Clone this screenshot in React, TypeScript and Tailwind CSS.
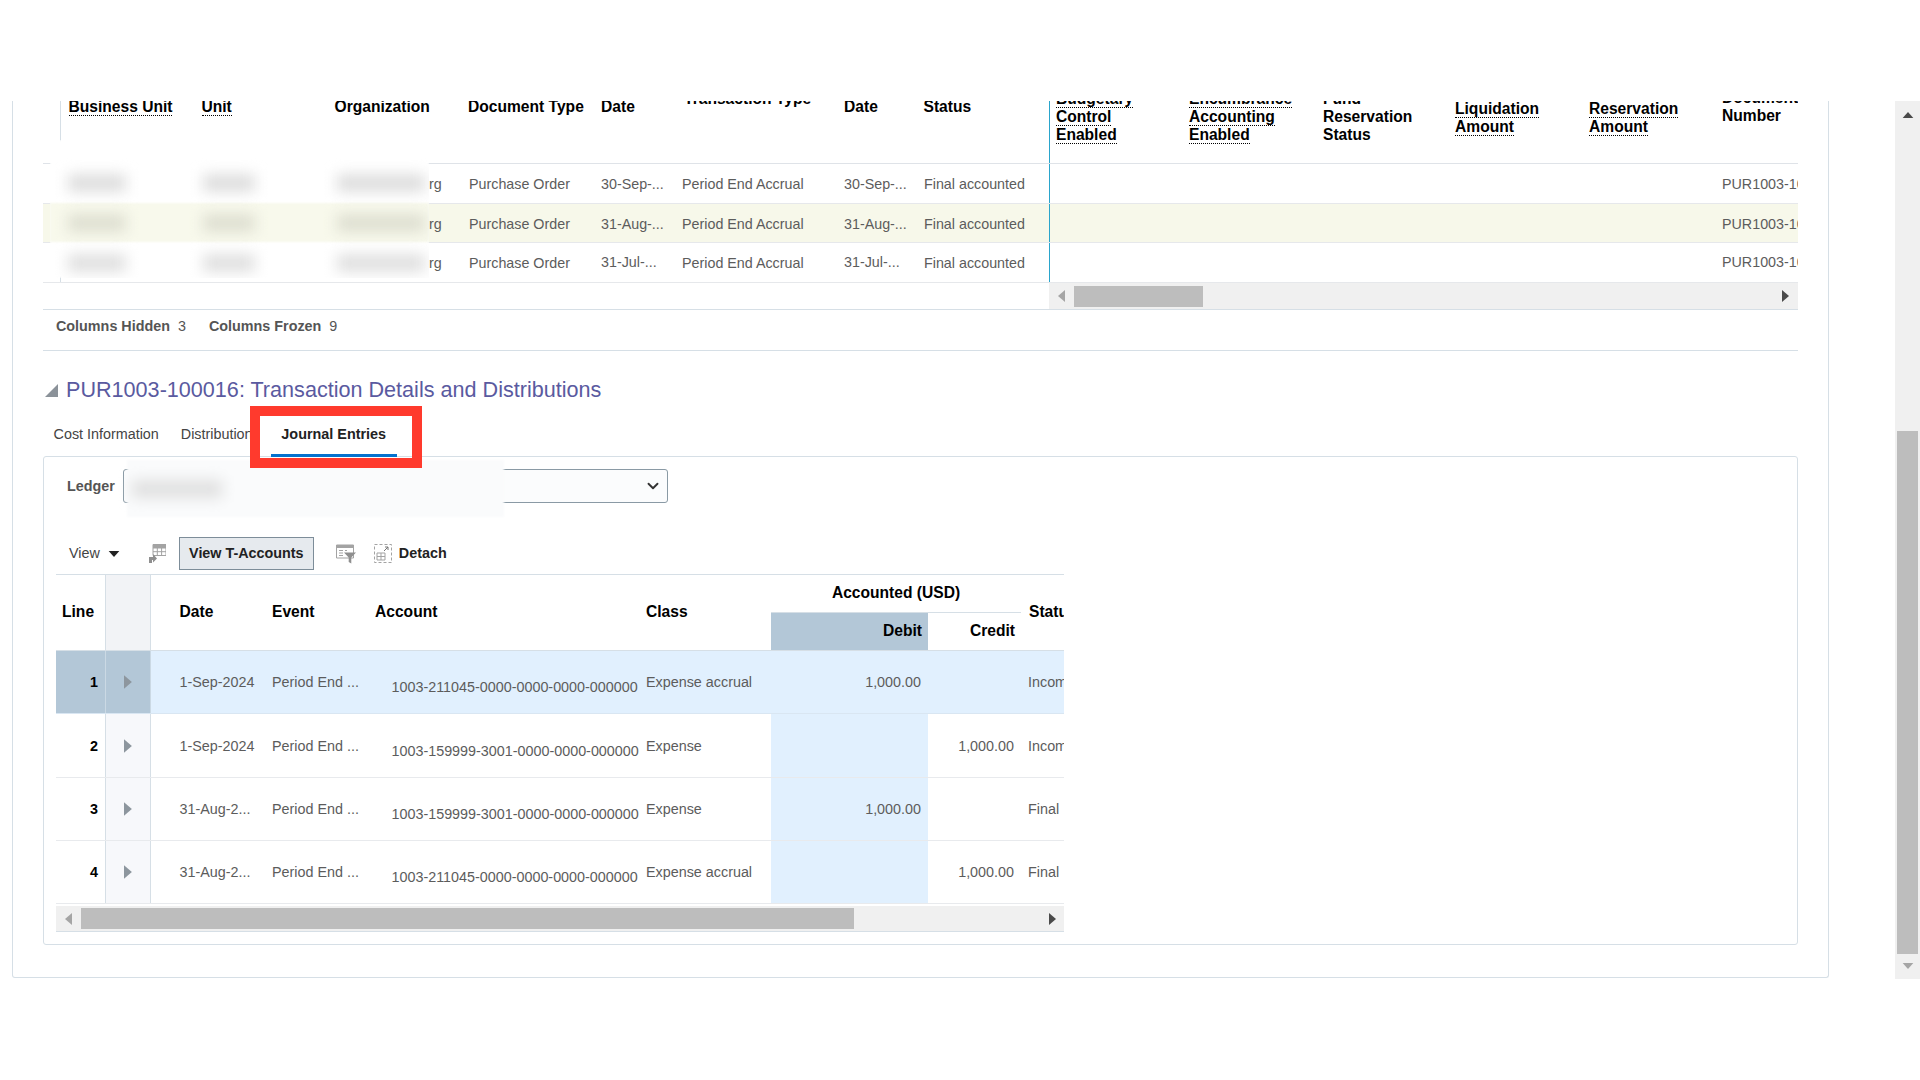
import { ChevronDown } from 'lucide-react'

const headerCols = [
  { w: 'w-[133px]', pl: 'pl-[7.5px]', pb: 'pb-[47px]', lines: ['Business Unit'], dotted: true },
  { w: 'w-[133px]', pl: 'pl-[7.5px]', pb: 'pb-[47px]', lines: ['Unit'], dotted: true },
  { w: 'w-[134px]', pl: 'pl-[7.5px]', pb: 'pb-[47px]', lines: ['Organization'], dotted: false },
  { w: 'w-[133px]', pl: 'pl-[7px]', pb: 'pb-[47px]', lines: ['Document Type'], dotted: false },
  { w: 'w-[80px]', pl: 'pl-[7px]', pb: 'pb-[47px]', lines: ['Date'], dotted: false },
  { w: 'w-[162px]', pl: 'pl-[10px]', pb: 'pb-[55px]', lines: ['Transaction Type'], dotted: false },
  { w: 'w-[81px]', pl: 'pl-[8px]', pb: 'pb-[47px]', lines: ['Date'], dotted: false },
  { w: 'w-[132px]', pl: 'pl-[6.5px]', pb: 'pb-[47px]', lines: ['Status'], dotted: false },
  { w: 'w-[133px] border-l border-[#2aa5cc]', pl: 'pl-[6px]', pb: 'pb-[19px]', lines: ['Budgetary', 'Control', 'Enabled'], dotted: true },
  { w: 'w-[133px]', pl: 'pl-[7px]', pb: 'pb-[19px]', lines: ['Encumbrance', 'Accounting', 'Enabled'], dotted: true },
  { w: 'w-[133px]', pl: 'pl-[8px]', pb: 'pb-[19px]', lines: ['Fund', 'Reservation', 'Status'], dotted: false },
  { w: 'w-[134px]', pl: 'pl-[7px]', pb: 'pb-[27px]', lines: ['Liquidation', 'Amount'], dotted: true },
  { w: 'w-[133px]', pl: 'pl-[7px]', pb: 'pb-[27px]', lines: ['Reservation', 'Amount'], dotted: true },
  { w: 'w-[83px]', pl: 'pl-[7px]', pb: 'pb-[38px]', lines: ['Document', 'Number'], dotted: false },
]

const topRows = [
  { h: 'h-[40px]', bg: 'bg-white', date: '30-Sep-...', pt: 'pt-[2px]', datePt: 'pt-[2px]' },
  { h: 'h-[39px]', bg: 'bg-[#f7f8ea]', date: '31-Aug-...', pt: 'pt-[4px]', datePt: 'pt-[3px]' },
  { h: 'h-[40px]', bg: 'bg-white', date: '31-Jul-...', pt: 'pt-[2px]', datePt: 'pt-0' },
]

const journalRows = [
  { line: 1, h: 'h-[63px]', date: '1-Sep-2024', account: '1003-211045-0000-0000-0000-000000', cls: 'Expense accrual', debit: '1,000.00', credit: '', status: 'Incomplete', selected: true },
  { line: 2, h: 'h-[64px]', date: '1-Sep-2024', account: '1003-159999-3001-0000-0000-000000', cls: 'Expense', debit: '', credit: '1,000.00', status: 'Incomplete', selected: false },
  { line: 3, h: 'h-[63px]', date: '31-Aug-2...', account: '1003-159999-3001-0000-0000-000000', cls: 'Expense', debit: '1,000.00', credit: '', status: 'Final', selected: false },
  { line: 4, h: 'h-[63px]', date: '31-Aug-2...', account: '1003-211045-0000-0000-0000-000000', cls: 'Expense accrual', debit: '', credit: '1,000.00', status: 'Final', selected: false },
]

function Triangle({ dir, className, box }: { dir: 'left' | 'right' | 'up' | 'down'; className: string; box?: string }) {
  const points = {
    left: '8,0 8,12 1,6',
    right: '0,0 0,12 7,6',
    up: '6,1 12,8 0,8',
    down: '0,1 12,1 6,8',
  }[dir]
  const size = box ?? (dir === 'left' || dir === 'right' ? 'w-[8px] h-[12px]' : 'w-[12px] h-[8px]')
  const viewBox = dir === 'left' || dir === 'right' ? '0 0 8 12' : '0 0 12 9'
  return (
    <svg viewBox={viewBox} className={`${size} ${className}`}>
      <polygon points={points} fill="currentColor" />
    </svg>
  )
}

function FreezeIcon() {
  return (
    <svg viewBox="0 0 18 20" className="w-[18px] h-[20px] text-[#a3a3a3] ml-[1px]">
      <path d="M5 0.5h13v11h-13z M5 4h13 M5 7.7h13 M9.3 0.5v11 M13.6 0.5v11" fill="none" stroke="currentColor" strokeWidth="1" />
      <rect x="5" y="0.5" width="13" height="3.5" fill="currentColor" />
      <path d="M1 19v-6h4v-3l4 4.5-4 4v-2.5h-1v3z" fill="#8f8f8f" />
    </svg>
  )
}

function FilterIcon() {
  return (
    <svg viewBox="0 0 20 20" className="w-[20px] h-[20px] text-[#a3a3a3]">
      <path d="M0.5 1h17v13h-17z" fill="none" stroke="currentColor" />
      <rect x="0.5" y="1" width="17" height="3" fill="currentColor" />
      <path d="M3 6.5h4M3 9h4M3 11.5h4M9 6.5h2" stroke="currentColor" />
      <path d="M8 8.5h12l-4.7 5v6l-2.6-1.5v-4.5z" fill="#8f8f8f" />
    </svg>
  )
}

function DetachIcon() {
  return (
    <svg viewBox="0 0 18 19" className="w-[18px] h-[19px] text-[#a3a3a3]">
      <rect x="0.5" y="0.5" width="17" height="18" fill="none" stroke="currentColor" strokeDasharray="3 2" />
      <path d="M3 9h8v7h-8z M3 12.5h8 M7 9v7" fill="none" stroke="currentColor" />
      <path d="M10 7l4-4M11 3h3v3" fill="none" stroke="#777" />
    </svg>
  )
}

function Blob({ className }: { className: string }) {
  return <div className={`h-[18px] blur-[7px] ${className}`} />
}

function TopTable() {
  return (
    <div className="relative w-[1755px]">
      <div className="flex h-[63px] border-b border-[#dfe3e8] overflow-hidden">
        <div className="w-[18px] border-r border-[#d6dfe6]" />
        {headerCols.map((col, i) => (
          <div key={i} className={`${col.w} ${col.pl} ${col.pb} shrink-0 flex flex-col justify-end overflow-hidden text-[15.6px] font-bold text-black whitespace-nowrap`}>
            {col.lines.map((text) =>
              col.dotted ? (
                <span key={text} className="block w-fit leading-[17px] border-b border-dotted border-black">{text}</span>
              ) : (
                <span key={text} className="block leading-[18px]">{text}</span>
              )
            )}
          </div>
        ))}
      </div>

      {topRows.map((row, i) => (
        <div key={i} className={`flex items-center ${row.h} ${row.bg} border-b border-[#e6e8eb] text-[14.3px] text-[#5c5c5c] whitespace-nowrap`}>
          <div className="w-[18px] h-full border-r border-[#d6dfe6]" />
          <div className={`w-[400px] pl-[368px] ${row.pt}`}>rg</div>
          <div className={`w-[133px] pl-[8px] ${row.pt}`}>Purchase Order</div>
          <div className={`w-[80px] pl-[7px] ${row.datePt}`}>{row.date}</div>
          <div className={`w-[162px] pl-[8px] ${row.pt}`}>Period End Accrual</div>
          <div className={`w-[81px] pl-[8px] ${row.datePt}`}>{row.date}</div>
          <div className={`w-[132px] pl-[7px] ${row.pt}`}>Final accounted</div>
          <div className="w-[666px] h-full border-l border-[#2aa5cc]" />
          <div className={`w-[83px] pl-[7px] overflow-hidden ${row.datePt}`}>PUR1003-100016</div>
        </div>
      ))}

      <div className="flex h-[27px] border-b border-[#d6dfe6]">
        <div className="w-[1006px]" />
        <div className="w-[749px] h-[26px] bg-[#f0f0f0] flex items-center">
          <Triangle dir="left" className="text-[#a5a5a5] ml-[8px]" />
          <div className="ml-[9px] w-[129px] h-[21px] bg-[#bdbdbd]" />
          <div className="flex-1" />
          <Triangle dir="right" className="text-[#4a4a4a] mr-[8px]" />
        </div>
      </div>

      {/* redacted columns, painted over the rows */}
      <div className="absolute left-[7px] top-[39px] w-[379px] h-[138px] overflow-hidden z-10">
        <div className="absolute inset-0 bg-white blur-[1px]" />
        <div className="absolute left-0 right-0 top-[63px] h-[39px] bg-[#f8f9ec] blur-[1px]" />
        <div className="relative flex flex-col pt-[23px]">
          {['bg-[#dedede]', 'bg-[#dedfd1]', 'bg-[#e0e0e0]'].map((tone, i) => (
            <div key={i} className="flex items-center h-[40px]">
              <Blob className={`ml-[18px] w-[58px] ${tone}`} />
              <Blob className={`ml-[77px] w-[52px] ${tone}`} />
              <Blob className={`ml-[82px] w-[88px] ${tone}`} />
            </div>
          ))}
        </div>
      </div>
    </div>
  )
}

function JournalTable() {
  return (
    <div className="w-[1008px]">
      <div className="flex h-[76px] border-b border-[#d6dfe6] text-[15.6px] font-bold text-black whitespace-nowrap">
        <div className="w-[49px] pl-[6px] pb-[2px] flex items-center">Line</div>
        <div className="w-[46px] bg-[#f2f3f6] border-x border-[#d6dfe6]" />
        <div className="w-[23px]" />
        <div className="w-[92px] pl-[5.5px] pb-[2px] flex items-center">Date</div>
        <div className="w-[102px] pl-[6px] pb-[2px] flex items-center">Event</div>
        <div className="w-[271px] pl-[7px] pb-[2px] flex items-center">Account</div>
        <div className="w-[132px] pl-[7px] pb-[2px] flex items-center">Class</div>
        <div className="w-[250px] flex flex-col">
          <div className="h-[38px] pb-[2px] flex items-center justify-center border-b border-[#d6dfe6]">Accounted (USD)</div>
          <div className="flex-1 flex">
            <div className="w-[157px] bg-[#b3c7d7] pr-[6px] pb-[2px] flex items-center justify-end">Debit</div>
            <div className="w-[93px] pr-[6px] pb-[2px] flex items-center justify-end">Credit</div>
          </div>
        </div>
        <div className="w-[43px] pl-[8px] pb-[2px] flex items-center overflow-hidden">Status</div>
      </div>

      {journalRows.map((row) => (
        <div key={row.line} className={`flex ${row.h} border-b ${row.selected ? 'border-[#d9e6f2] bg-[#e1f0fe]' : 'border-[#e8eaed] bg-white'} text-[14.35px] text-[#5c5c5c] whitespace-nowrap`}>
          <div className={`w-[49px] pr-[7px] pt-[2px] flex items-center justify-end font-bold text-black ${row.selected ? 'bg-[#b3c7d7]' : ''}`}>{row.line}</div>
          <div className={`w-[46px] border-x flex items-center pl-[18px] ${row.selected ? 'bg-[#b3c7d7] border-[#cbd9e4]' : 'bg-[#f7f8fb] border-[#d6dfe6]'}`}>
            <Triangle dir="right" box="w-[9px] h-[14px]" className="text-[#8d969e]" />
          </div>
          <div className="w-[23px]" />
          <div className="w-[92px] pl-[5.5px] pt-[2px] flex items-center">{row.date}</div>
          <div className="w-[102px] pl-[6px] pt-[2px] flex items-center">Period End ...</div>
          <div className="w-[271px] pl-[23.5px] pt-[12px] flex items-center">{row.account}</div>
          <div className="w-[132px] pl-[7px] pt-[2px] flex items-center">{row.cls}</div>
          <div className="w-[157px] pr-[7px] pt-[2px] flex items-center justify-end bg-[#e1f0fe]">{row.debit}</div>
          <div className="w-[93px] pr-[7px] pt-[2px] flex items-center justify-end">{row.credit}</div>
          <div className="w-[43px] pl-[7px] pt-[2px] flex items-center overflow-hidden">{row.status}</div>
        </div>
      ))}

      <div className="mt-[2px] h-[26px] bg-[#f0f0f0] border-b border-[#d6dfe6] flex items-center">
        <Triangle dir="left" className="text-[#a5a5a5] ml-[8px]" />
        <div className="ml-[9px] w-[773px] h-[21px] bg-[#bdbdbd]" />
        <div className="flex-1" />
        <Triangle dir="right" className="text-[#4a4a4a] mr-[7px]" />
      </div>
    </div>
  )
}

export default function App() {
  return (
    <div className="w-[1920px] h-[1080px] bg-white overflow-hidden pt-[101px] pl-[12px] flex items-start font-['Liberation_Sans',Arial,sans-serif]">
      <main className="w-[1817px] h-[877px] shrink-0 border-x border-b border-[#d6dfe6] rounded-b-[3px] pl-[30px]">
        <TopTable />

        <div className="w-[1755px] h-[41px] pb-[7px] pl-[13px] flex items-center border-b border-[#d6dfe6] text-[14.35px] text-[#555] whitespace-nowrap">
          <span className="font-bold">Columns Hidden</span>
          <span className="ml-[8px]">3</span>
          <span className="ml-[23px] font-bold">Columns Frozen</span>
          <span className="ml-[8px]">9</span>
        </div>

        <div className="h-[60px] pt-[18px] pl-[2px] flex items-center">
          <svg viewBox="0 0 13 13" className="w-[13px] h-[13px] text-[#8b9299]">
            <polygon points="13,0 13,13 0,13" fill="currentColor" />
          </svg>
          <h2 className="ml-[8px] text-[21.6px] font-normal text-[#5a5aa0] whitespace-nowrap">PUR1003-100016: Transaction Details and Distributions</h2>
        </div>

        <div className="relative h-[46px] -mb-px z-20 flex text-[14.35px] whitespace-nowrap">
          <div className="ml-[10.6px] pt-[2px] flex items-center text-[#444]">Cost Information</div>
          <div className="ml-[22px] pt-[2px] flex items-center text-[#444]">Distributions</div>
          <div className="ml-[11px] w-[126px] pt-[5px] flex items-center justify-center border-b-[3px] border-[#0572ce] font-bold text-[#222]">
            <span className="text-[14.4px]">Journal Entries</span>
          </div>
          {/* annotation box from the screenshot */}
          <div className="absolute left-[207px] top-[-5px] w-[172px] h-[62px] border-[10px] border-[#ff3a2d]" />
        </div>

        <section className="relative w-[1755px] h-[489px] border border-[#d6dfe6] rounded-[3px] pl-[12px]">
          <div className="mt-[12px] h-[34px] flex items-center">
            <span className="ml-[11px] pt-[2px] text-[14.35px] font-bold text-[#555]">Ledger</span>
            <div className="ml-[8px] w-[545px] h-[34px] border border-[#8a9aa5] rounded-[3px] bg-[#fbfcfd] flex items-center justify-end pr-[5px]">
              <ChevronDown className="w-[18px] h-[18px] text-[#333]" strokeWidth={2.5} />
            </div>
          </div>

          {/* redacted ledger name */}
          <div className="absolute left-[83px] top-[3px] w-[377px] h-[57px] bg-[#fafbfc] blur-[1px] z-10 flex items-center">
            <Blob className="ml-[5px] w-[90px] bg-[#e0e0e0]" />
          </div>

          <div className="mt-[34px] w-[1008px] h-[38px] flex items-start border-b border-[#d6dfe6]">
            <div className="ml-[13px] h-[33px] flex items-center text-[14.35px] text-[#444]">
              View
              <Triangle dir="down" className="ml-[8px] text-[#222]" />
            </div>
            <div className="ml-[27px] h-[33px] flex items-center"><FreezeIcon /></div>
            <button className="ml-[13px] w-[135px] h-[33px] border border-[#7d8d99] bg-[#e6eaee] text-[14.35px] font-bold text-[#222]">View T-Accounts</button>
            <div className="ml-[22px] h-[33px] flex items-center"><FilterIcon /></div>
            <div className="ml-[18px] h-[33px] flex items-center"><DetachIcon /></div>
            <div className="ml-[7px] h-[33px] flex items-center text-[14.35px] font-bold text-[#222]">Detach</div>
          </div>

          <JournalTable />
        </section>
      </main>

      <aside className="ml-[66px] w-[25px] h-[878px] shrink-0 bg-[#f0f0f0] flex flex-col items-center">
        <Triangle dir="up" className="mt-[10px] text-[#4a4a4a]" />
        <div className="mt-[312px] w-[21px] h-[523px] bg-[#bdbdbd]" />
        <Triangle dir="down" className="mt-[8px] text-[#a5a5a5]" />
      </aside>
    </div>
  )
}
